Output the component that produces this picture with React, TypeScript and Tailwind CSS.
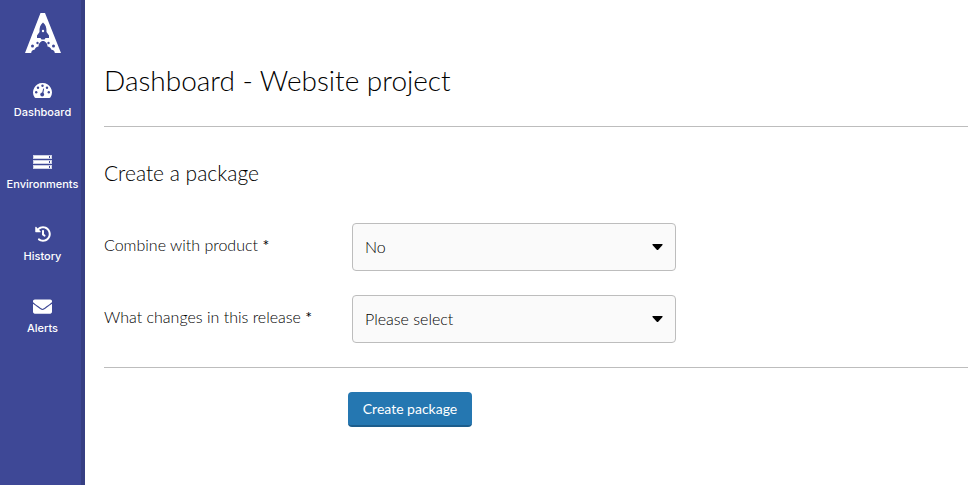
import { useState } from "react";
import { FaEnvelope, FaHistory } from "react-icons/fa";

function Logo() {
  return (
    <svg viewBox="0 0 36 40" className="h-10 w-9" aria-hidden="true">
      <path
        fill="#fff"
        d="M15.500 0h4.500L36 40h-6.200c0-2-1.300-3.300-3.300-3.300-1-2.200-2.600-3.200-4-3.200.3-2.500-1.500-4.500-3.500-5.500h-2c-2 1-3.800 3-3.500 5.500-1.400 0-3 1-4 3.200-2 0-3.300 1.300-3.300 3.300H0z"
      />
      <g fill="#3e4896">
        <path d="M18 9.500c-2.500 2-3.800 5-3.500 9.500L12 22.500V25h3.500l1 1.500h3l1-1.500H24v-2.500L21.500 19c.3-4.500-1-7.500-3.500-9.500z" />
        <circle cx="7.500" cy="33" r="1.500" />
        <circle cx="12.500" cy="30" r="1.200" />
        <circle cx="23.500" cy="30" r="1.200" />
        <circle cx="28.500" cy="33" r="1.500" />
      </g>
      <circle cx="18" cy="18" r="1.200" fill="#fff" />
    </svg>
  );
}

function GaugeIcon() {
  return (
    <svg viewBox="0 0 19 15" className="h-[15px] w-[19px]" aria-hidden="true">
      <path fill="#fff" d="M9.500 0A9.300 9.300 0 0 0 1.500 14.200q.4.800 1.200.8h13.600q.8 0 1.200-.8A9.300 9.300 0 0 0 9.500 0z" />
      <g fill="#3e4896">
        <circle cx="3.200" cy="9.300" r="1.200" />
        <circle cx="5" cy="4.700" r="1.200" />
        <circle cx="9.500" cy="2.800" r="1.200" />
        <circle cx="14" cy="4.700" r="1.200" />
        <circle cx="15.800" cy="9.300" r="1.200" />
        <circle cx="9.200" cy="11.500" r="1.900" />
        <path d="M10.200 5.500l.9.200-1 6-1.400-.3z" />
      </g>
    </svg>
  );
}

function ServerIcon() {
  return (
    <svg viewBox="0 0 19 15" className="h-[15px] w-[19px]" aria-hidden="true">
      {[0, 5, 10].map((y) => (
        <g key={y}>
          <rect y={y} width="19" height="4" fill="#fff" opacity=".75" />
          <rect x="1" y={y + 1} width="17" height="2" fill="#fff" />
          <rect x="16" y={y + 1} width="1" height="2" fill="#3e4896" />
        </g>
      ))}
    </svg>
  );
}

const links = [
  { name: "Dashboard", icon: <GaugeIcon /> },
  { name: "Environments", icon: <ServerIcon /> },
  { name: "History", icon: <FaHistory size={16} /> },
  { name: "Alerts", icon: <FaEnvelope size={19} /> },
];

function SelectField({ id, label, options }: { id: string; label: string; options: string[] }) {
  const [value, setValue] = useState(options[0]);

  return (
    <div className="flex">
      <label htmlFor={id} className="w-[248px] shrink-0 pt-2 text-base/7 font-light">
        {label} <span className="font-normal">*</span>
      </label>
      <div className="relative w-full max-w-[324px]">
        <select
          id={id}
          value={value}
          onChange={(e) => setValue(e.target.value)}
          className="h-12 w-full appearance-none rounded border border-[#bdbdbd] bg-[#fafafa] pl-3 pr-10 text-base font-light text-black"
        >
          {options.map((option) => (
            <option key={option}>{option}</option>
          ))}
        </select>
        <div className="pointer-events-none absolute inset-y-0 right-3 flex items-center">
          <svg viewBox="0 0 12 6" className="h-1.5 w-3" aria-hidden="true">
            <path d="M.5 0h10v1L6 6H5L.5 1z" />
          </svg>
        </div>
      </div>
    </div>
  );
}

export default function App() {
  return (
    <div className="flex min-h-screen bg-white font-['Lato',sans-serif] text-black">
      <nav className="w-[85px] shrink-0 border-r-4 border-[#363f83] bg-[#3e4896] pt-[13px] text-white">
        <a href="#" aria-label="Home" className="flex justify-center pl-1">
          <Logo />
        </a>
        <ul className="mt-[27px]">
          {links.map((link) => (
            <li key={link.name} className="h-[72px]">
              <a href="#" className="flex flex-col items-center pl-1 font-['Inter',sans-serif] text-[11px]/4 font-medium">
                <span className="flex h-5 items-center">{link.icon}</span>
                <span className="mt-1">{link.name}</span>
              </a>
            </li>
          ))}
        </ul>
      </nav>

      <main className="min-w-0 flex-1 pl-[19px]">
        <h1 className="pt-[62px] text-[28px]/9 font-light">Dashboard - Website project</h1>
        <hr className="mt-7 border-[#bdbdbd]" />
        <h2 className="mt-[30px] text-[21px]/8 font-light">Create a package</h2>
        <form onSubmit={(e) => e.preventDefault()}>
          <div className="mt-[34px] flex flex-col gap-6">
            <SelectField id="combine" label="Combine with product" options={["No", "Yes"]} />
            <SelectField id="changes" label="What changes in this release" options={["Please select", "Content", "Code"]} />
          </div>
          <hr className="mt-6 border-[#bdbdbd]" />
          <button
            type="submit"
            className="ml-[244px] mt-6 h-[35px] w-[124px] rounded border-b-2 border-[#1c5d8c] bg-[#2577b1] text-sm text-white"
          >
            Create package
          </button>
        </form>
      </main>
    </div>
  );
}
